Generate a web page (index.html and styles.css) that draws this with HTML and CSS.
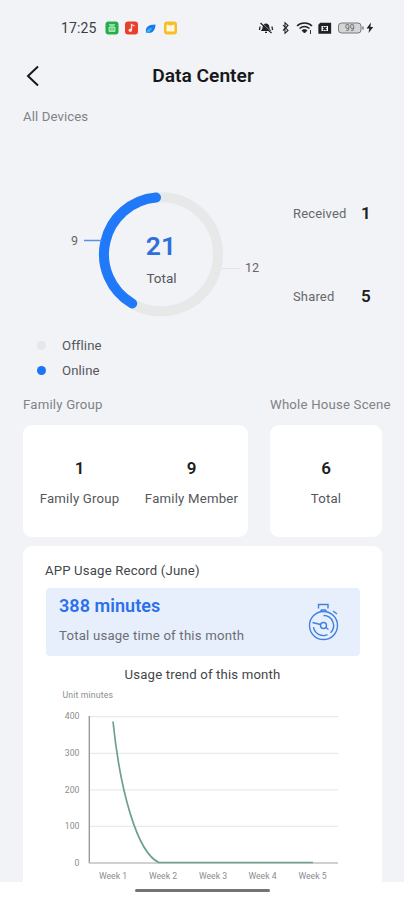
FILE: index.html
```html
<!DOCTYPE html>
<html lang="en">
<head>
<meta charset="utf-8">
<title>Data Center</title>
<link rel="stylesheet" href="styles.css">
</head>
<body>
<main class="screen">
  <header class="status">
    <span class="clock">17:25</span>
    <svg class="apps" width="74" height="16" viewBox="0 0 74 16">
      <rect x="0.500" y="1.500" width="13" height="13" rx="3" fill="#25ad4b"/>
      <path d="M4 4l1.500 2h3L10 4M4 7h6v4.500H4z" fill="#8bdc9c" stroke="#b9efc3" stroke-width=".8"/>
      <path d="M5.500 8.500v1M8.500 8.500v1" stroke="#25ad4b"/>
      <rect x="20" y="1.500" width="13" height="13" rx="3" fill="#e8402f"/>
      <path d="M26.500 10V4.500l3 1.500" fill="none" stroke="#ffe0d8" stroke-width="1.300"/><circle cx="25.300" cy="10.300" r="1.700" fill="#ffe0d8"/>
      <path d="M41 12.500c-1-5 2-8 9.500-8 0 5-3 8.500-6.500 8.500z" fill="#1b78ea"/><path d="M41 13c1-4 3-5 6-5-1 3-3 5-6 5z" fill="#33b8f5"/>
      <rect x="59" y="1.500" width="13" height="13" rx="3" fill="#f6bd27"/>
      <path d="M61.500 4.500l4 1 4-1v7h-8z" fill="#fff7d8"/>
    </svg>
    <svg class="signals" width="118" height="16" viewBox="0 0 118 16">
      <g fill="#202124" stroke="#202124">
        <path d="M4 10.500c1-1 1-2 1.200-3.500C5.500 5 6.500 4 8 4s2.500 1 2.800 3c.2 1.500.2 2.500 1.200 3.500zM7 12.300h2" stroke-width="1.200"/>
        <path d="M2.500 3l11 10M2 6.500L1.500 10M14 6.500l.5 3.500" fill="none" stroke-width="1.300"/>
        <path d="M4.500 3.500l8.500 8" stroke="#f1f3f7" stroke-width=".5"/>
        <path d="M25 5l5 5.500-3 2.800V2.700L30 5.500l-5 5" fill="none" stroke-width="1.100"/>
        <path d="M39 6c4-4 11-4 15 0M41.500 8.500c3-2.500 7-2.500 10 0" fill="none" stroke-width="1.500"/>
        <path d="M44 10.500c1.500-1.200 3.500-1.200 5 0L46.500 13zM52.500 10v4" stroke-width=".9"/>
        <path d="M62.500 3.500h10v9.500H61V5z" stroke-width="1.300"/>
      </g>
      <path d="M63.500 6h6.500v5h-6.500z" fill="#fff"/><path d="M65 6.800l3.500 3.500M68.500 6.800L65 10.300" stroke="#202124" stroke-width="1.500"/>
      <rect x="80.500" y="3" width="22.500" height="10" rx="3" fill="#d4d5d7" stroke="#77797d"/>
      <path d="M105 6.500v3" stroke="#77797d" stroke-width="1.500"/>
      <text x="91.700" y="11.300" class="battery">99</text>
      <path d="M113 2.500L108.500 8.500h2.800l-.8 4.500 4.800-6h-2.900z" fill="#202124"/>
    </svg>
  </header>

  <nav class="titlebar">
    <svg class="back" width="14" height="22" viewBox="0 0 14 22"><path d="M12 1.500L2 11l10 9.500" fill="none" stroke="#17181a" stroke-width="2"/></svg>
    <h1>Data Center</h1>
  </nav>

  <p class="section all">All Devices</p>

  <section class="devices">
    <svg class="donut" width="210" height="140" viewBox="60 184 210 140">
      <circle cx="161" cy="254.300" r="57" fill="none" stroke="#e7e8e8" stroke-width="10"/>
      <path d="M156 197.500A57 57 0 0 0 132.200 303.500" fill="none" stroke="#2079f8" stroke-width="10" stroke-linecap="round"/>
      <path d="M84 240.500h18" stroke="#5591e8" stroke-width="1.500"/>
      <path d="M222 268.500h18" stroke="#e3e4e6"/>
      <text x="74.500" y="244.500" class="callout">9</text>
      <text x="252" y="272" class="callout">12</text>
      <text x="161" y="255.300" class="big">21</text>
      <text x="161.500" y="283" class="total">Total</text>
    </svg>
    <dl class="counts">
      <dt>Received</dt><dd>1</dd>
      <dt>Shared</dt><dd>5</dd>
    </dl>
  </section>

  <ul class="legend">
    <li><i class="dot"></i>Offline</li>
    <li><i class="dot on"></i>Online</li>
  </ul>

  <div class="groups">
    <section>
      <p class="section">Family Group</p>
      <div class="card pair">
        <div class="stat"><b>1</b><span>Family Group</span></div>
        <div class="stat"><b>9</b><span>Family Member</span></div>
      </div>
    </section>
    <section>
      <p class="section scene">Whole House Scene</p>
      <div class="card">
        <div class="stat"><b>6</b><span>Total</span></div>
      </div>
    </section>
  </div>

  <section class="usage">
    <h2>APP Usage Record (June)</h2>
    <div class="banner">
      <div>
        <strong>388 minutes</strong>
        <span>Total usage time of this month</span>
      </div>
      <svg width="32" height="38" viewBox="0 0 32 38" fill="none" stroke="#3f80e2" stroke-width="1.400">
        <circle cx="15.500" cy="22.500" r="14"/>
        <path d="M10.500 5.500V1.500h9.500V5.500M12.500 8.500l1-1.500h4l1 1.500"/>
        <path d="M25 8l4 3"/>
        <path d="M15.500 12.500a10 10 0 0 1 7 17.200M19.500 31.700a10 10 0 0 1-14-7.500"/>
        <circle cx="15.500" cy="22.500" r="3"/>
        <path d="M4.500 19.500l8 2M18 24.500l2.500 2"/>
      </svg>
    </div>
    <h3>Usage trend of this month</h3>
    <svg class="chart" width="300" height="194" viewBox="50 687 300 194">
      <text x="62.500" y="697.500" class="unit">Unit minutes</text>
      <path d="M89 716.700h249M89 753.300h249M89 790h249M89 826.300h249" stroke="#e3e5e8"/>
      <path d="M89.300 716v147" stroke="#929497" stroke-width="1.300"/>
      <path d="M88.700 863H338" stroke="#bfc1c3" stroke-width="1.700"/>
      <path d="M113 721.500C120 790 137 853 159 862.500H313" fill="none" stroke="#6fa08f" stroke-width="1.700"/>
      <g class="ylab">
        <text x="79.500" y="719.300">400</text><text x="79.500" y="756">300</text><text x="79.500" y="792.700">200</text><text x="79.500" y="829.200">100</text><text x="79.500" y="865.500">0</text>
      </g>
      <g class="xlab">
        <text x="113" y="879">Week 1</text><text x="163" y="879">Week 2</text><text x="213" y="879">Week 3</text><text x="262.500" y="879">Week 4</text><text x="312.500" y="879">Week 5</text>
      </g>
    </svg>
  </section>

  <footer class="homebar"><i></i></footer>
</main>
</body>
</html>
```

FILE: styles.css
```css
* { box-sizing: border-box; margin: 0; padding: 0; }
body { background: #fff; font-family: Roboto, sans-serif; color: #333; }
svg { display: block; flex: none; }
.screen { width: 404px; height: 900px; overflow: hidden; background: #f1f3f7; display: flex; flex-direction: column; }

.status { height: 56px; padding: 0 28px 0 61px; display: flex; align-items: center; }
.clock { width: 44px; font-size: 14px; letter-spacing: 0.15px; color: #3c3d40; }
.signals { margin-left: auto; }
.battery { font-size: 8.500px; text-anchor: middle; fill: #5c5e61; }

.titlebar { height: 40px; padding-left: 26px; display: grid; grid-template-columns: 14px 326px; align-items: center; }
.titlebar h1 { font-size: 19.200px; line-height: 24px; font-weight: 600; color: #17181a; text-align: center; }

.section { font-size: 13.200px; line-height: 18px; letter-spacing: 0.2px; color: #808286; white-space: nowrap; }
.all { margin: 12px 0 0 23px; letter-spacing: 0.1px; }

.devices { margin-top: 58px; height: 140px; display: flex; padding-left: 60px; }
.donut text { text-anchor: middle; }
.callout { font-size: 12.500px; fill: #666; }
.big { font-size: 26.500px; font-weight: 600; fill: #2f6fdc; }
.total { font-size: 13.500px; fill: #55575a; }
.counts { margin-left: 23px; padding-top: 19px; display: grid; grid-template-columns: 68px 20px; grid-template-rows: 20px 20px; row-gap: 63px; align-items: center; }
.counts dt { font-size: 13px; letter-spacing: 0.15px; color: #66686b; }
.counts dd { font-size: 17px; font-weight: 600; color: #1d1e20; }

.legend { list-style: none; margin: 9px 0 0 37px; }
.legend li { height: 25px; display: flex; align-items: center; gap: 16px; font-size: 13.200px; letter-spacing: 0.1px; color: #55575a; }
.dot { width: 9px; height: 9px; border-radius: 50%; background: #e6e7e8; }
.dot.on { background: #1c74f6; }

.groups { margin: 13px 0 0 23px; display: grid; grid-template-columns: 225px 112px; column-gap: 22px; }
.card { margin-top: 11px; height: 112px; border-radius: 9px; background: #fff; display: flex; justify-content: center; padding-top: 33px; }
.stat { text-align: center; white-space: nowrap; width: 112px; }
.stat b { display: block; font-size: 17px; line-height: 20px; font-weight: 600; color: #1d1e20; }
.stat span { display: block; margin-top: 12px; font-size: 13.200px; line-height: 18px; letter-spacing: 0.2px; color: #55575a; }

.usage { margin: 9px 22px 0 23px; height: 336px; padding: 16px 22px 0; background: #fff; border-radius: 9px 9px 0 0; }
.usage h2 { font-size: 13.200px; line-height: 18px; font-weight: 400; letter-spacing: 0.15px; color: #444649; }
.banner { margin-top: 8px; height: 68px; margin-left: 1px; border-radius: 4px; background: #e7effd; padding: 0 20px 0 13px; display: flex; align-items: center; justify-content: space-between; }
.banner strong { display: block; margin-top: -2px; font-size: 18px; line-height: 22px; font-weight: 600; letter-spacing: 0.05px; color: #2c70ea; }
.banner span { display: block; margin: 10px 0 2px; font-size: 13.200px; line-height: 18px; letter-spacing: 0.2px; color: #6b6e74; }
.usage h3 { margin-top: 10px; font-size: 13.200px; line-height: 18px; font-weight: 400; letter-spacing: 0.15px; color: #444649; text-align: center; }
.chart { margin: 3px 0 0 5px; }
.unit, .ylab, .xlab { font-size: 8.700px; fill: #8b8d90; }
.unit { letter-spacing: 0.15px; }
.ylab { text-anchor: end; }
.xlab { text-anchor: middle; }

.homebar { flex: 1; background: #fff; display: flex; justify-content: center; padding-top: 7px; }
.homebar i { width: 135px; height: 3px; border-radius: 2px; background: #747476; }
```
